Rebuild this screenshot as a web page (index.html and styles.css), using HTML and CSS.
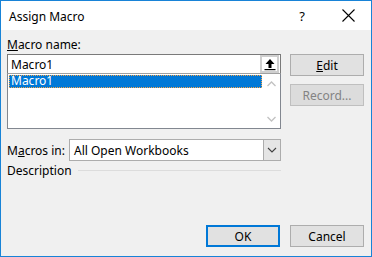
FILE: index.html
```html
<!DOCTYPE html>
<html lang="en">
<head>
  <meta charset="UTF-8">
  <title>Assign Macro</title>
  <link rel="stylesheet" href="styles.css">
</head>
<body>
  <div class="window">
    <div class="titlebar">
      <span class="title">Assign Macro</span>
      <span class="help">?</span>
      <span class="close">
        <svg width="13" height="13" viewBox="0 0 13 13"><path d="M0.5 0.5L12.5 12.5M12.5 0.5L0.5 12.5" stroke="#000" stroke-width="1.1" fill="none"/></svg>
      </span>
    </div>
    <div class="content">
      <div class="main">
        <div class="label"><u>M</u>acro name:</div>
        <div class="namebox">
          <span class="nametext">Macro1</span>
          <span class="upbtn">
            <svg width="12" height="13" viewBox="0 0 12 13"><path d="M6 1L1.5 6H4.5V10H7.5V6H10.5Z" fill="#000"/><rect x="0.5" y="11" width="11" height="1.2" fill="#000"/></svg>
          </span>
        </div>
        <div class="list">
          <div class="items">
            <div class="item selected">Macro1</div>
          </div>
          <div class="scrollbar">
            <svg width="17" height="12" viewBox="0 0 17 12"><path d="M4.5 8L8.5 4L12.5 8" stroke="#c2c2c2" stroke-width="1.3" fill="none"/></svg>
            <svg width="17" height="12" viewBox="0 0 17 12"><path d="M4.5 4L8.5 8L12.5 4" stroke="#c2c2c2" stroke-width="1.3" fill="none"/></svg>
          </div>
        </div>
        <div class="inrow">
          <span class="inlabel">M<u>a</u>cros in:</span>
          <div class="combo">
            <span class="combotext">All Open Workbooks</span>
            <span class="combobtn">
              <svg width="10" height="6" viewBox="0 0 10 6"><path d="M1 1L5 5L9 1" stroke="#404040" stroke-width="1.1" fill="none"/></svg>
            </span>
          </div>
        </div>
        <div class="descrow">
          <span>Description</span>
          <span class="rule"></span>
        </div>
      </div>
      <div class="side">
        <div class="btn"><u>E</u>dit</div>
        <div class="btn disabled">Record...</div>
      </div>
      <div class="footer">
        <div class="btn default">OK</div>
        <div class="btn">Cancel</div>
      </div>
    </div>
  </div>
</body>
</html>
```

FILE: styles.css
```css
*{
  margin:0;
  padding:0;
  box-sizing:border-box;
}

body{
  font-family:"Noto Sans", "Open Sans", sans-serif;
  font-size:12px;
  color:#000;
  background:#fff;
}

.window{
  width:372px;
  height:257px;
  border:1px solid #1883d7;
  display:flex;
  flex-direction:column;
  background:#f0f0f0;
}

.titlebar{
  height:29px;
  background:#fff;
  display:flex;
  align-items:center;
  padding-left:8px;
}
.title{
  flex:1;
  font-size:12px;
  margin-top:1px;
}
.help{
  width:46px;
  text-align:center;
  font-size:13px;
}
.close{
  width:46px;
  height:29px;
  display:flex;
  align-items:center;
  justify-content:center;
}

.content{
  flex:1;
  display:grid;
  grid-template-columns:274px 74px;
  grid-template-rows:1fr auto;
  column-gap:9px;
  padding:7px 7px 9px 6px;
}

.main{
  display:flex;
  flex-direction:column;
}
.label{
  height:16px;
  line-height:16px;
  margin-bottom:1px;
}

.namebox{
  height:20px;
  border:1px solid #7a7a7a;
  background:#fff;
  display:flex;
  align-items:center;
  padding:0 1px 0 3px;
}
.nametext{flex:1;}
.upbtn{
  width:19px;
  height:18px;
  border:2px solid #cfcfcf;
  background:#fff;
  display:flex;
  align-items:center;
  justify-content:center;
}

.list{
  height:56px;
  margin-top:-1px;
  border:1px solid #828790;
  border-top-color:#a0a0a0;
  background:#fff;
  display:flex;
}
.items{
  flex:1;
  padding:1px;
}
.item{
  height:13px;
  line-height:12px;
  padding-left:2px;
}
.item.selected{
  background:#0078d7;
  color:#fff;
  outline:1px dotted #f3a54c;
  outline-offset:-1px;
}
.scrollbar{
  width:17px;
  display:flex;
  flex-direction:column;
  justify-content:space-between;
  padding:4px 0 3px;
  background:#fff;
}

.inrow{
  display:flex;
  align-items:center;
  margin-top:10px;
  height:22px;
}
.inlabel{width:62px;}
.combo{
  flex:1;
  height:22px;
  border:1px solid #acacac;
  background:#fff;
  display:flex;
  align-items:center;
  padding-left:4px;
}
.combotext{flex:1;}
.combobtn{
  width:17px;
  height:20px;
  border-left:1px solid #acacac;
  background:#e5e5e5;
  display:flex;
  align-items:center;
  justify-content:center;
}

.descrow{
  display:flex;
  align-items:center;
  margin-top:1px;
  height:16px;
}
.rule{
  flex:1;
  height:1px;
  background:#dcdcdc;
  margin-left:6px;
}

.side{
  display:flex;
  flex-direction:column;
  gap:8px;
  padding-top:17px;
}

.btn{
  height:22px;
  width:74px;
  border:1px solid #adadad;
  background:#e1e1e1;
  display:flex;
  align-items:center;
  justify-content:center;
}
.btn.disabled{
  color:#838383;
  border-color:#bfbfbf;
  background:#dcdcdc;
}
.btn.default{
  border:2px solid #0078d7;
}

.footer{
  grid-column:1 / 3;
  display:flex;
  justify-content:flex-end;
  gap:10px;
}
```
